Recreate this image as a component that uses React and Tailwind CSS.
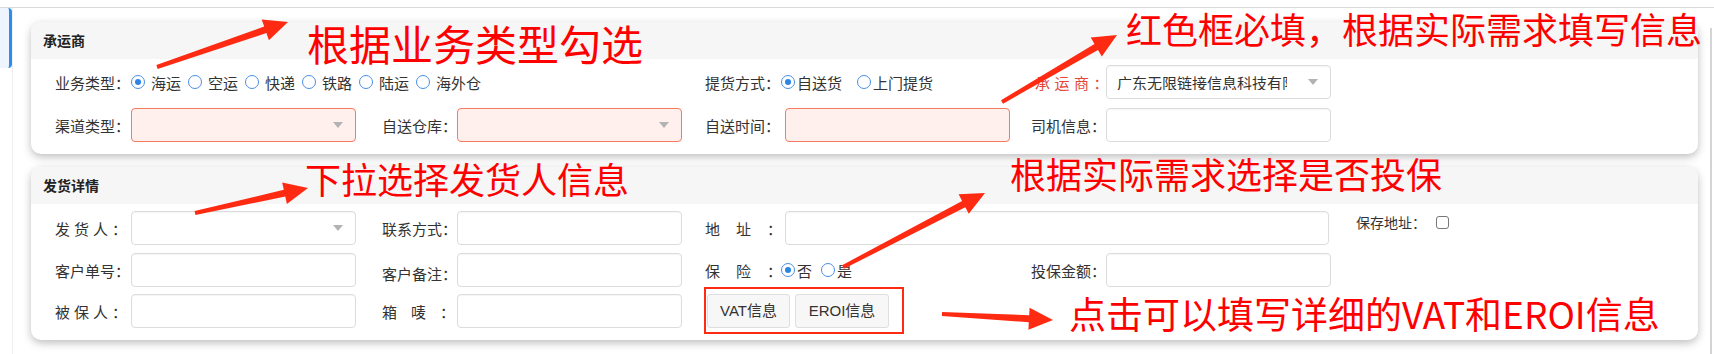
import React from "react";

const FONT = "font-['Noto_Sans_CJK_SC','Noto_Sans',sans-serif]";

// tail -> tip of the red annotation arrows
const arrows = [
  [157, 67, 288, 22],
  [1002, 102, 1117, 35],
  [195, 213, 308, 188],
  [843, 267, 985, 193],
  [942, 314, 1053, 320],
];

function arrowPoints([x1, y1, x2, y2]) {
  const dx = x2 - x1;
  const dy = y2 - y1;
  const len = Math.hypot(dx, dy);
  const ux = dx / len;
  const uy = dy / len;
  const nx = -uy;
  const ny = ux;
  const hl = 24, hw = 11, w1 = 2, w2 = 3.5;
  const bx = x2 - ux * hl;
  const by = y2 - uy * hl;
  const pts = [
    [x1 + nx * w1, y1 + ny * w1],
    [bx + nx * w2, by + ny * w2],
    [bx + nx * hw, by + ny * hw],
    [x2, y2],
    [bx - nx * hw, by - ny * hw],
    [bx - nx * w2, by - ny * w2],
    [x1 - nx * w1, y1 - ny * w1],
  ];
  return pts.map((p) => p.map((v) => v.toFixed(1)).join(",")).join(" ");
}

const Label = ({ children, className = "" }) => (
  <span className={`shrink-0 whitespace-nowrap text-[15px] leading-none text-[#333] ${className}`}>
    {children}
  </span>
);

const Caret = () => (
  <svg width="10" height="6" viewBox="0 0 10 6" className="shrink-0">
    <path d="M0 0h10L5 6z" fill="#b3b3b3" />
  </svg>
);

const Box = ({ red, select, className = "w-[225px]", children }) => (
  <div
    className={`h-[34px] shrink-0 rounded-[4px] border flex items-center justify-between pl-[10px] pr-[12px] ${
      red ? "border-[#f47a60] bg-[#fff0ed]" : "border-[#dcdcdc] bg-white shadow-[inset_0_1px_1px_rgba(0,0,0,0.04)]"
    } ${className}`}
  >
    <div className="w-[170px] overflow-hidden whitespace-nowrap text-[15px] leading-none text-[#333]">{children}</div>
    {select && <Caret />}
  </div>
);

const Radio = ({ checked }) => (
  <span className="w-[14px] h-[14px] shrink-0 rounded-full border border-[#4a8fe7] bg-white flex items-center justify-center">
    {checked && <span className="w-[6px] h-[6px] rounded-full bg-[#2b85e4]" />}
  </span>
);

const Panel = ({ title, children }) => (
  <div className="rounded-[10px] bg-white shadow-[0_3px_8px_rgba(0,0,0,0.26)] overflow-hidden">
    <div className="h-[37px] bg-[#f6f6f6] pl-[12px] flex items-center text-[14px] font-bold text-[#222]">
      {title}
    </div>
    {children}
  </div>
);

export default function App() {
  const bizTypes = ["海运", "空运", "快递", "铁路", "陆运", "海外仓"];

  return (
    <div className={`relative w-[1714px] h-[354px] bg-white overflow-hidden ${FONT}`}>
      {/* top strip */}
      <div className="h-[8px] bg-white border-b border-[#dadada]" />

      <div className="flex h-[346px]">
        {/* left tab marker */}
        <div className="w-[13px] shrink-0 border-r border-[#efefef]">
          <div className="w-[12px] h-[60px] rounded-r-[4px] bg-[#eef5fe] border-r-[3px] border-[#2d8cf0]" />
        </div>

        <div className="flex-1 pl-[18px] pr-[12px] pt-[14px] flex flex-col gap-[13px]">
          {/* 承运商 */}
          <Panel title="承运商">
            <div className="pt-[6px] pb-[12px] pl-[24px] flex flex-col gap-[9px]">
              <div className="h-[34px] flex items-center">
                <div className="w-[650px] flex items-center">
                  <Label className="w-[76px]">业务类型：</Label>
                  {bizTypes.map((t, i) => (
                    <div key={t} className="flex items-center mr-[7px]">
                      <Radio checked={i === 0} />
                      <span className="ml-[6px] text-[15px] leading-none text-[#333]">{t}</span>
                    </div>
                  ))}
                </div>
                <div className="w-[326px] flex items-center">
                  <Label className="w-[76px]">提货方式：</Label>
                  <Radio checked />
                  <span className="ml-[2px] text-[15px] leading-none text-[#333]">自送货</span>
                  <span className="ml-[15px]"><Radio /></span>
                  <span className="ml-[2px] text-[15px] leading-none text-[#333]">上门提货</span>
                </div>
                <div className="flex items-center">
                  <Label className="w-[75px] pl-[4px] tracking-[4.5px] text-[#e5483a]">承运商：</Label>
                  <Box select>广东无限链接信息科技有限公司</Box>
                </div>
              </div>

              <div className="h-[34px] flex items-center">
                <div className="w-[327px] flex items-center">
                  <Label className="w-[76px]">渠道类型：</Label>
                  <Box red select />
                </div>
                <div className="w-[323px] flex items-center">
                  <Label className="w-[75px]">自送仓库：</Label>
                  <Box red select />
                </div>
                <div className="w-[326px] flex items-center">
                  <Label className="w-[80px]">自送时间：</Label>
                  <Box red />
                </div>
                <div className="flex items-center">
                  <Label className="w-[75px]">司机信息：</Label>
                  <Box />
                </div>
              </div>
            </div>
          </Panel>

          {/* 发货详情 */}
          <Panel title="发货详情">
            <div className="pt-[7px] pb-[12px] pl-[24px] flex flex-col">
              <div className="h-[34px] flex items-center">
                <div className="w-[327px] flex items-center">
                  <Label className="w-[76px] tracking-[4px]">发货人：</Label>
                  <Box select />
                </div>
                <div className="w-[323px] flex items-center">
                  <Label className="w-[75px]">联系方式：</Label>
                  <Box />
                </div>
                <div className="flex items-center">
                  <Label className="w-[80px] tracking-[16px]">地址：</Label>
                  <Box className="w-[544px]" />
                </div>
                <div className="self-start mt-[4px] ml-[27px] flex items-center">
                  <span className="text-[14px] leading-none text-[#333]">保存地址：</span>
                  <span className="ml-[10px] w-[13px] h-[13px] rounded-[3px] border border-[#777] bg-white" />
                </div>
              </div>

              <div className="mt-[8px] h-[34px] flex items-center">
                <div className="w-[327px] flex items-center">
                  <Label className="w-[76px]">客户单号：</Label>
                  <Box />
                </div>
                <div className="w-[323px] flex items-center">
                  <Label className="w-[75px] pt-[6px]">客户备注：</Label>
                  <Box />
                </div>
                <div className="w-[326px] flex items-center">
                  <Label className="w-[76px] tracking-[16px]">保险：</Label>
                  <Radio checked />
                  <span className="ml-[2px] text-[15px] leading-none text-[#333]">否</span>
                  <span className="ml-[9px]"><Radio /></span>
                  <span className="ml-[2px] text-[15px] leading-none text-[#333]">是</span>
                </div>
                <div className="flex items-center">
                  <Label className="w-[75px]">投保金额：</Label>
                  <Box />
                </div>
              </div>

              <div className="mt-[7px] h-[34px] flex items-center">
                <div className="w-[327px] flex items-center">
                  <Label className="w-[76px] tracking-[4px]">被保人：</Label>
                  <Box />
                </div>
                <div className="w-[323px] flex items-center">
                  <Label className="w-[75px] tracking-[14px]">箱唛：</Label>
                  <Box />
                </div>
                <div className="flex items-center gap-[5px] pl-[2px]">
                  <button className="h-[34px] w-[83px] rounded-[3px] border border-[#dedede] bg-[#f7f7f7] text-[15px] text-[#333] font-['Liberation_Sans','Noto_Sans_CJK_SC',sans-serif]">
                    VAT信息
                  </button>
                  <button className="h-[34px] w-[94px] rounded-[3px] border border-[#dedede] bg-[#f7f7f7] text-[15px] text-[#333] font-['Liberation_Sans','Noto_Sans_CJK_SC',sans-serif]">
                    EROI信息
                  </button>
                </div>
              </div>
            </div>
          </Panel>
        </div>

        {/* right scroll edge */}
        <div className="w-[2px] mt-[20px] bg-[#d4d4d4]" />
        <div className="w-[2px]" />
      </div>

      {/* annotations */}
      <div className="absolute inset-0 pointer-events-none">
        <svg width="1714" height="354" className="absolute left-0 top-0">
          {arrows.map((a, i) => (
            <polygon key={i} points={arrowPoints(a)} fill="#ff2a12" />
          ))}
        </svg>
        <div className="absolute left-[704px] top-[287px] w-[200px] h-[47px] border-2 border-[#ff2a12]" />

        <span className="absolute left-[307px] top-[22px] text-[42px] leading-none text-[#ff0000] whitespace-nowrap">
          根据业务类型勾选
        </span>
        <span className="absolute left-[1126px] top-[10px] text-[36px] leading-none text-[#ff0000] whitespace-nowrap">
          红色框必填，根据实际需求填写信息
        </span>
        <span className="absolute left-[305px] top-[160px] text-[36px] leading-none text-[#ff0000] whitespace-nowrap">
          下拉选择发货人信息
        </span>
        <span className="absolute left-[1010px] top-[155px] text-[36px] leading-none text-[#ff0000] whitespace-nowrap">
          根据实际需求选择是否投保
        </span>
        <span className="absolute left-[1069px] top-[295px] text-[37px] leading-none text-[#ff0000] whitespace-nowrap">
          点击可以填写详细的VAT和EROI信息
        </span>
      </div>
    </div>
  );
}
